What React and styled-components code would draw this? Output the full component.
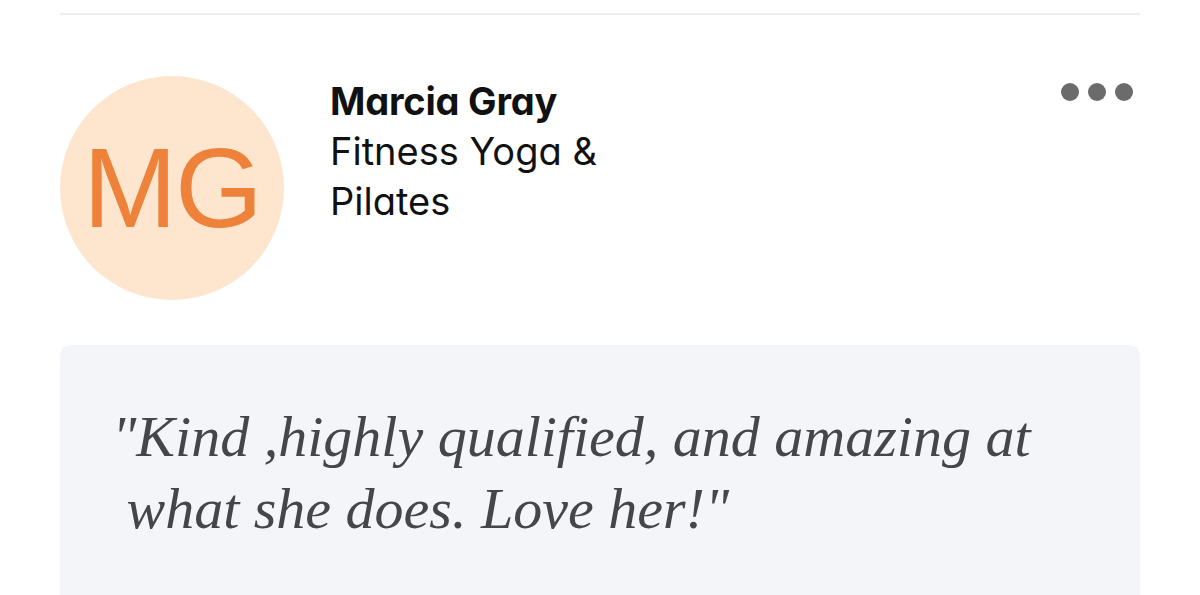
import React from "react";
import styled, { createGlobalStyle } from "styled-components";

const Global = createGlobalStyle`
  html, body { margin: 0; padding: 0; background: #ffffff; }
  body { font-family: "Inter", "Liberation Sans", sans-serif; overflow: hidden; }
`;

const Page = styled.div`
  width: 1200px;
  height: 595px;
  padding: 0 60px;
  box-sizing: border-box;
  overflow: hidden;
`;

const Divider = styled.div`
  margin-top: 13px;
  height: 2px;
  background: #eeeeee;
  border-radius: 1px;
`;

const Header = styled.div`
  display: flex;
  align-items: flex-start;
  margin-top: 61px;
`;

const Avatar = styled.div`
  flex: none;
  width: 224px;
  height: 224px;
  border-radius: 50%;
  background: #fde6cd;
  display: flex;
  align-items: center;
  justify-content: center;
  font-family: "Liberation Sans", Arial, sans-serif;
  font-size: 113px;
  color: #ef823a;
  letter-spacing: -2px;
`;

const Info = styled.div`
  flex: 1;
  margin-left: 46px;
  font-family: "Inter", sans-serif;
  font-feature-settings: "cv11" 1;
  color: #111111;
  font-size: 38px;
  line-height: 50px;
  letter-spacing: 0;
`;

const Name = styled.div`
  font-weight: 700;
  letter-spacing: -0.2px;
`;

const Sub = styled.div`
  font-weight: 400;
  width: 300px;
`;

const Dots = styled.div`
  flex: none;
  display: flex;
  gap: 9px;
  margin-top: 7px;
  margin-right: 7px;
`;

const Dot = styled.span`
  width: 18px;
  height: 18px;
  border-radius: 50%;
  background: #6b6b6b;
`;

const QuoteBox = styled.div`
  margin-top: 45px;
  background: #f3f5f8;
  border-radius: 10px;
  padding: 56px 52px 80px;
  min-height: 260px;
`;

const Quote = styled.p`
  margin: 0;
  font-family: "Liberation Serif", "Times New Roman", serif;
  font-style: italic;
  font-size: 58px;
  line-height: 72px;
  color: #45464a;
`;

export default function App() {
  return (
    <>
      <Global />
      <Page>
        <Divider />
        <Header>
          <Avatar>MG</Avatar>
          <Info>
            <Name>Marcia Gray</Name>
            <Sub>Fitness Yoga &amp; Pilates</Sub>
          </Info>
          <Dots>
            <Dot />
            <Dot />
            <Dot />
          </Dots>
        </Header>
        <QuoteBox>
          <Quote>
            "Kind ,highly qualified, and amazing at
            <br />
            &nbsp;what she does. Love her!"
          </Quote>
        </QuoteBox>
      </Page>
    </>
  );
}
